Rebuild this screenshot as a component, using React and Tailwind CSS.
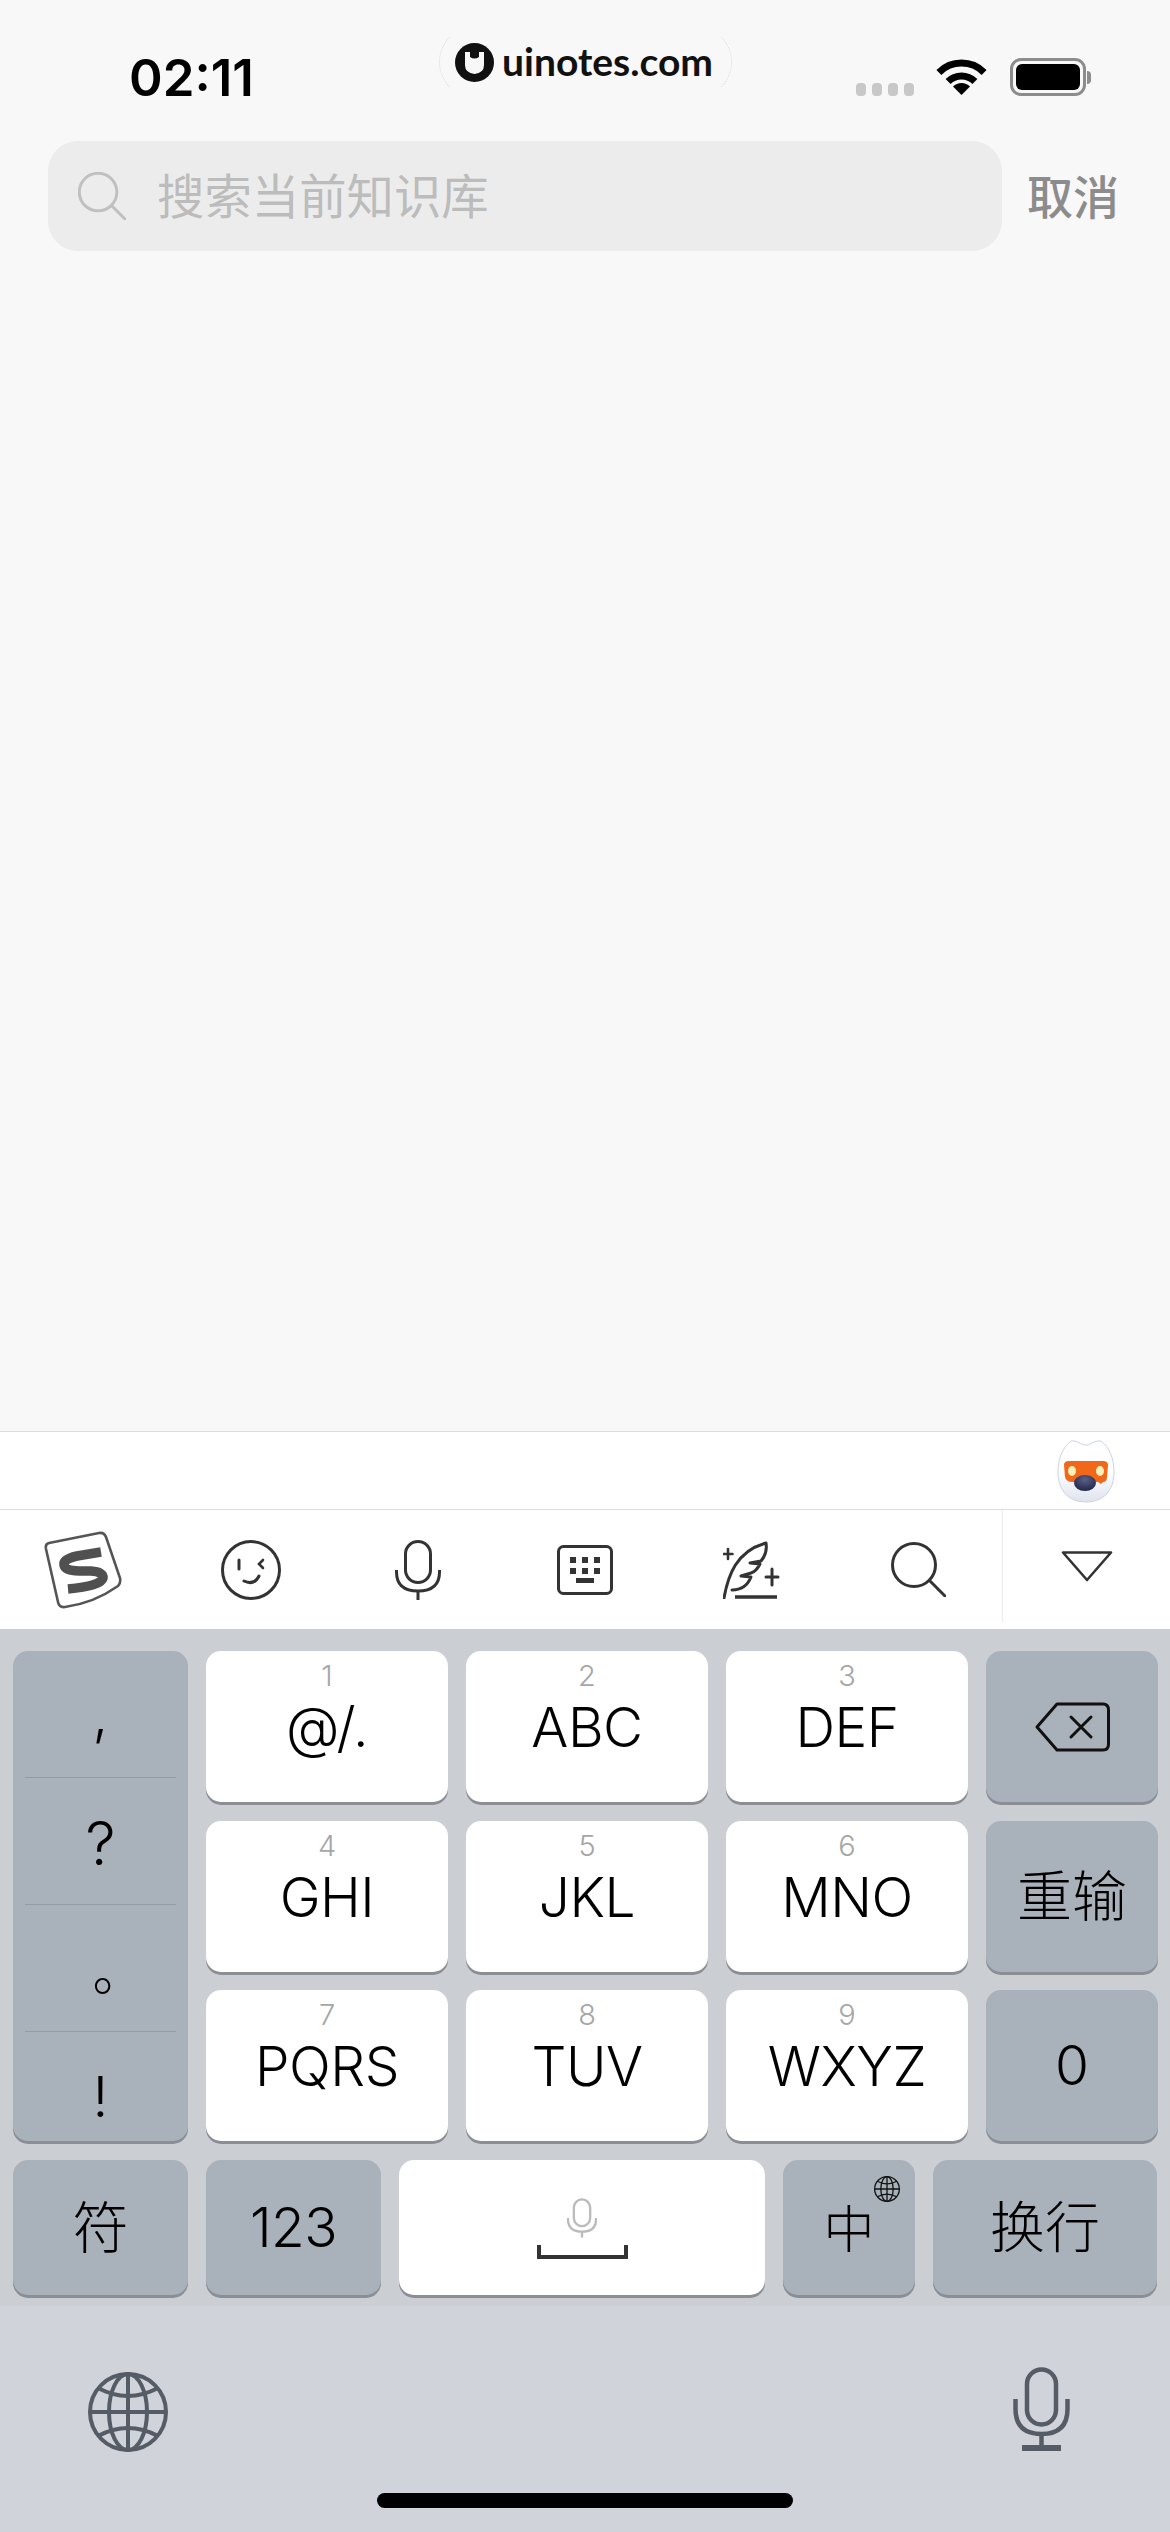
const sans = "font-['Inter','Noto_Sans_CJK_SC',sans-serif]";

function Key({ num, label, white = true, children, className = '' }) {
  return (
    <div
      className={`flex h-[151px] flex-col items-center self-start rounded-[15px] ${
        white ? 'bg-white' : 'bg-[#a9b1ba]'
      } shadow-[0_3px_0_#8b8f95] ${className}`}
    >
      {children ?? (
        <>
          <span className="mt-[13px] h-[24px] text-[29px] leading-[24px] font-light text-[#a6a6a6]">{num}</span>
          <span className="mt-[15px] text-[55px] leading-[48px] font-light tracking-[-0.5px] text-black">{label}</span>
        </>
      )}
    </div>
  );
}

function SogouIcon() {
  return (
    <svg width="80" height="78" viewBox="0 0 80 78" fill="none">
      <path d="M5 12 L55 2 Q60 1 62 6 L76 47 Q77 52 74 55 Q50 72 21 76 Q15 77 14 71 L2 18 Q1 13 5 12 Z" stroke="#555" strokeWidth="2.6" fill="#fff" />
      <path d="M57 21 L33 25 Q19 28 20 34 Q21 40 35 40 L47 40 Q60 41 59 47 Q57 55 24 58" stroke="#505050" strokeWidth="9.5" />
    </svg>
  );
}

function SmileIcon() {
  return (
    <svg width="60" height="60" viewBox="0 0 60 60" fill="none" stroke="#333" strokeWidth="3" strokeLinecap="round">
      <circle cx="30" cy="30" r="28.5" />
      <path d="M18 20 V29" />
      <path d="M42 20 L38 24 L42 28" strokeWidth="2.6" />
      <path d="M23 41 Q33 46 38 36" />
    </svg>
  );
}

function MicIcon({ color = '#333', w = 46, h = 60, width = 3 }) {
  return (
    <svg width={w} height={h} viewBox="0 0 46 60" fill="none" stroke={color} strokeWidth={width}>
      <rect x="10.5" y="1.5" width="25" height="41" rx="12.5" />
      <path d="M1.5 30 V32 Q1.5 51 23 51 Q44.5 51 44.5 32 V30" />
      <path d="M23 51 V60" />
    </svg>
  );
}

function KeyboardIcon() {
  return (
    <svg width="56" height="50" viewBox="0 0 56 50" fill="#333">
      <rect x="1.5" y="1.5" width="53" height="47" rx="5" fill="none" stroke="#333" strokeWidth="3" />
      <rect x="13" y="12" width="6" height="6" />
      <rect x="25" y="12" width="6" height="6" />
      <rect x="37" y="12" width="6" height="6" />
      <rect x="13" y="23" width="6" height="6" />
      <rect x="25" y="23" width="6" height="6" />
      <rect x="37" y="23" width="6" height="6" />
      <rect x="19" y="33" width="18" height="5" />
    </svg>
  );
}

function QuillIcon() {
  return (
    <svg width="58" height="58" viewBox="0 0 58 58" fill="none" stroke="#333" strokeWidth="3" strokeLinecap="round" strokeLinejoin="round">
      <path d="M1 57 C5 35 13 10 43 2 C44 8 43 14 38 20 L27 22 L37 23 C34 29 31 31 28 32 L18 35 L28 36 C24 46 16 49 9 49" />
      <path d="M12 56 H54" strokeWidth="3.4" strokeLinecap="butt" />
      <path d="M5 8 V18 M0.5 13 H9.5" strokeWidth="2.6" />
      <path d="M49 28 V44 M43 36 H55" strokeWidth="3" />
    </svg>
  );
}

function SearchIcon({ color = '#333', size = 55, width = 3 }) {
  return (
    <svg width={size} height={size} viewBox="0 0 55 55" fill="none" stroke={color} strokeWidth={width} strokeLinecap="round">
      <circle cx="23" cy="23" r="21.5" />
      <path d="M38.5 38.5 L54 54" />
    </svg>
  );
}

function GlobeIcon({ size = 80, color = '#555c66', width = 4 }) {
  return (
    <svg width={size} height={size} viewBox="0 0 80 80" fill="none" stroke={color} strokeWidth={width}>
      <circle cx="40" cy="40" r="38" />
      <ellipse cx="40" cy="40" rx="19" ry="38" />
      <path d="M40 2 V78 M2 40 H78" />
      <path d="M10 16 Q40 32 70 16 M10 64 Q40 48 70 64" />
    </svg>
  );
}

function Mascot() {
  return (
    <svg width="58" height="66" viewBox="0 0 58 66">
      <defs>
        <linearGradient id="egg" x1="0" y1="0" x2="0" y2="1">
          <stop offset="0.5" stopColor="#ffffff" />
          <stop offset="1" stopColor="#dfe3ef" />
        </linearGradient>
        <radialGradient id="nose" cx="0.5" cy="0.3" r="0.7">
          <stop offset="0" stopColor="#5a5f86" />
          <stop offset="1" stopColor="#23264a" />
        </radialGradient>
      </defs>
      <path
        d="M1 34 C1 20 6 9 14 3 C20 2 24 7 29 7 C34 7 38 2 44 3 C52 9 57 20 57 34 C57 53 46 64 29 64 C12 64 1 53 1 34 Z"
        fill="url(#egg)"
        stroke="#cdd3e4"
      />
      <path d="M7 27 Q7 23 12 23 H46 Q51 23 51 27 L50 39 Q50 44 46 44 L44 46 L41 44 H16 Q9 44 8 39 Z" fill="#f2681a" />
      <ellipse cx="15" cy="33" rx="4" ry="5" fill="#fff0b8" />
      <ellipse cx="43" cy="33" rx="4" ry="5" fill="#fff0b8" />
      <ellipse cx="28" cy="45" rx="11" ry="8" fill="url(#nose)" />
    </svg>
  );
}

export default function App() {
  return (
    <div className={`relative flex h-[2532px] w-[1170px] flex-col overflow-hidden bg-[#f8f8f8] ${sans}`}>
      {/* watermark */}
      <div className="absolute top-[26px] left-[439px] flex h-[72px] w-[293px] items-center gap-[8px] rounded-[36px] border border-dotted border-x-[#d8d8d8] border-y-transparent pb-[2px] pl-[15px]">
        <svg width="39" height="39" viewBox="0 0 39 39" className="mt-[2px]">
          <circle cx="19.5" cy="19.5" r="19.5" fill="#111" />
          <path d="M10 9 H15 V14 Q19.5 17 24 14 V9 H29 V22 Q29 30 19.5 31 Q10 30 10 22 Z" fill="#f8f8f8" />
        </svg>
        <span className="font-['Lato'] text-[39px] leading-none font-bold text-[#111]">uinotes.com</span>
      </div>

      {/* status bar */}
      <div className="flex h-[141px] items-start pt-[48px] pr-[79px] pl-[129px]">
        <span className="text-[51px] leading-[60px] font-semibold text-black">02:11</span>
        <div className="ml-auto flex items-start pt-[10px]">
          <div className="mt-[25px] mr-[22px] flex gap-[6px]">
            <span className="h-[13px] w-[10px] rounded-[4px] bg-[#c8c8c8]" />
            <span className="h-[13px] w-[10px] rounded-[4px] bg-[#c8c8c8]" />
            <span className="h-[13px] w-[10px] rounded-[4px] bg-[#c8c8c8]" />
            <span className="h-[13px] w-[10px] rounded-[4px] bg-[#c8c8c8]" />
          </div>
          <svg width="51" height="38" viewBox="0 0 51 38" fill="none" stroke="#000" strokeWidth="7">
            <path d="M2.9 14.4 A32 32 0 0 1 48.1 14.4" />
            <path d="M12.1 23.6 A19 19 0 0 1 38.9 23.6" />
            <path d="M25.5 37 L17 28.5 A12 12 0 0 1 34 28.5 Z" fill="#000" stroke="none" />
          </svg>
          <div className="ml-[23px] flex items-center">
            <div className="h-[38px] w-[76px] rounded-[11px] border-[3px] border-[#8c8c8c] p-[3px]">
              <div className="h-full w-full rounded-[6px] bg-black" />
            </div>
            <div className="ml-[1px] h-[13px] w-[4px] rounded-r-[4px] bg-[#8c8c8c]" />
          </div>
        </div>
      </div>

      {/* search */}
      <div className="flex items-center pr-[51px] pl-[48px]">
        <div className="flex h-[110px] w-[954px] items-center rounded-[30px] bg-[#ececec] pl-[30px]">
          <SearchIcon color="#c0c0c0" size={48} width={3.4} />
          <span className="mt-[2px] ml-[31px] text-[47.4px] leading-none text-[#bcbcbc]">搜索当前知识库</span>
        </div>
        <span className="mt-[2px] ml-auto text-[46px] leading-none font-medium text-[#8c8c8c]">取消</span>
      </div>

      <div className="flex-1" />

      {/* candidate row */}
      <div className="flex h-[79px] items-center justify-end border-y border-[#dcdcdc] bg-white pr-[55px]">
        <Mascot />
      </div>

      {/* toolbar */}
      <div className="grid h-[119px] grid-cols-[repeat(6,167px)_1fr] bg-white">
        <div className="flex items-center justify-center"><SogouIcon /></div>
        <div className="flex items-center justify-center"><SmileIcon /></div>
        <div className="flex items-center justify-center"><MicIcon /></div>
        <div className="flex items-center justify-center"><KeyboardIcon /></div>
        <div className="flex items-center justify-center"><QuillIcon /></div>
        <div className="flex items-center justify-center"><SearchIcon /></div>
        <div className="mb-[7px] flex items-center justify-center border-l border-[#ececec]">
          <svg width="52" height="32" viewBox="0 0 52 32" fill="none" stroke="#333" strokeWidth="2.6" strokeLinejoin="round">
            <path d="M2 2.5 H50 L26 30 Z" />
          </svg>
        </div>
      </div>

      {/* keys */}
      <div className="bg-[#cbcfd4] pt-[22px] pb-[11px]">
        <div className="grid grid-cols-[175px_242px_242px_242px_172px] grid-rows-[152px_151px_151px] gap-x-[18px] gap-y-[18px] pl-[13px]">
          <div className="row-span-3 flex h-[490px] flex-col rounded-[15px] bg-[#a9b1ba] px-[12px] text-black shadow-[0_3px_0_#8b8f95]">
            <div className="flex h-[127px] items-center justify-center border-b border-[#949ca6] text-[56px] font-light">,</div>
            <div className="flex h-[127px] items-center justify-center border-b border-[#949ca6] pt-[4px] text-[60px] font-light">?</div>
            <div className="flex h-[127px] items-center justify-center border-b border-[#949ca6] pt-[10px] pl-[36px] text-[52px] font-light">。</div>
            <div className="flex flex-1 items-center justify-center pt-[20px] text-[56px] font-light">!</div>
          </div>
          <Key num="1" label="@/." />
          <Key num="2" label="ABC" />
          <Key num="3" label="DEF" />
          <Key white={false} className="justify-center">
            <svg width="75" height="50" viewBox="0 0 75 50" fill="none" stroke="#111" strokeWidth="3" strokeLinejoin="round">
              <path d="M22 2 H68 Q73.5 2 73.5 8 V42 Q73.5 48 68 48 H22 L2 25 Z" />
              <path d="M36 15 L56 35 M56 15 L36 35" strokeLinecap="round" />
            </svg>
          </Key>
          <Key num="4" label="GHI" />
          <Key num="5" label="JKL" />
          <Key num="6" label="MNO" />
          <Key white={false} className="justify-center text-[55px] leading-none font-light">重输</Key>
          <Key num="7" label="PQRS" />
          <Key num="8" label="TUV" />
          <Key num="9" label="WXYZ" />
          <Key white={false} className="justify-center text-[55px] leading-none font-light">0</Key>
        </div>
        <div className="mt-[19px] flex gap-x-[18px] pl-[13px]">
          <div className="flex h-[135px] w-[175px] items-center justify-center rounded-[15px] bg-[#a9b1ba] text-[56px] font-light shadow-[0_3px_0_#8b8f95]">符</div>
          <div className="flex h-[135px] w-[175px] items-center justify-center rounded-[15px] bg-[#a9b1ba] text-[55px] font-light tracking-[-0.5px] shadow-[0_3px_0_#8b8f95]">123</div>
          <div className="flex h-[135px] w-[366px] flex-col items-center justify-center rounded-[15px] bg-white shadow-[0_3px_0_#8b8f95]">
            <MicIcon color="#bbbbbb" w={30} h={44} width={3.6} />
            <svg width="91" height="14" viewBox="0 0 91 14" fill="none" stroke="#333" strokeWidth="4" className="mt-[5px]">
              <path d="M2 0 V12 H89 V0" />
            </svg>
          </div>
          <div className="relative flex h-[135px] w-[132px] items-center justify-center rounded-[15px] bg-[#a9b1ba] pt-[6px] text-[51px] font-light shadow-[0_3px_0_#8b8f95]">
            中
            <div className="absolute top-[16px] right-[15px]">
              <GlobeIcon size={26} color="#111" width={4} />
            </div>
          </div>
          <div className="flex h-[135px] w-[224px] items-center justify-center rounded-[15px] bg-[#a9b1ba] text-[55px] font-light shadow-[0_3px_0_#8b8f95]">换行</div>
        </div>
      </div>

      {/* home area */}
      <div className="flex h-[226px] flex-col bg-[#d0d3d9]">
        <div className="flex items-start justify-between pt-[61px] pr-[100px] pl-[88px]">
          <div className="mt-[5px]"><GlobeIcon /></div>
          <svg width="57" height="84" viewBox="0 0 57 84" fill="none" stroke="#555c66" strokeWidth="4.5">
            <rect x="14" y="2.5" width="29" height="55" rx="14.5" />
            <path d="M2.5 32 V42 Q2.5 67 28.5 67 Q54.5 67 54.5 42 V32" />
            <path d="M28.5 67 V78" />
            <path d="M9 81 H48" strokeWidth="6" />
          </svg>
        </div>
        <div className="mx-auto mt-[41px] h-[15px] w-[416px] rounded-full bg-black" />
      </div>
    </div>
  );
}
